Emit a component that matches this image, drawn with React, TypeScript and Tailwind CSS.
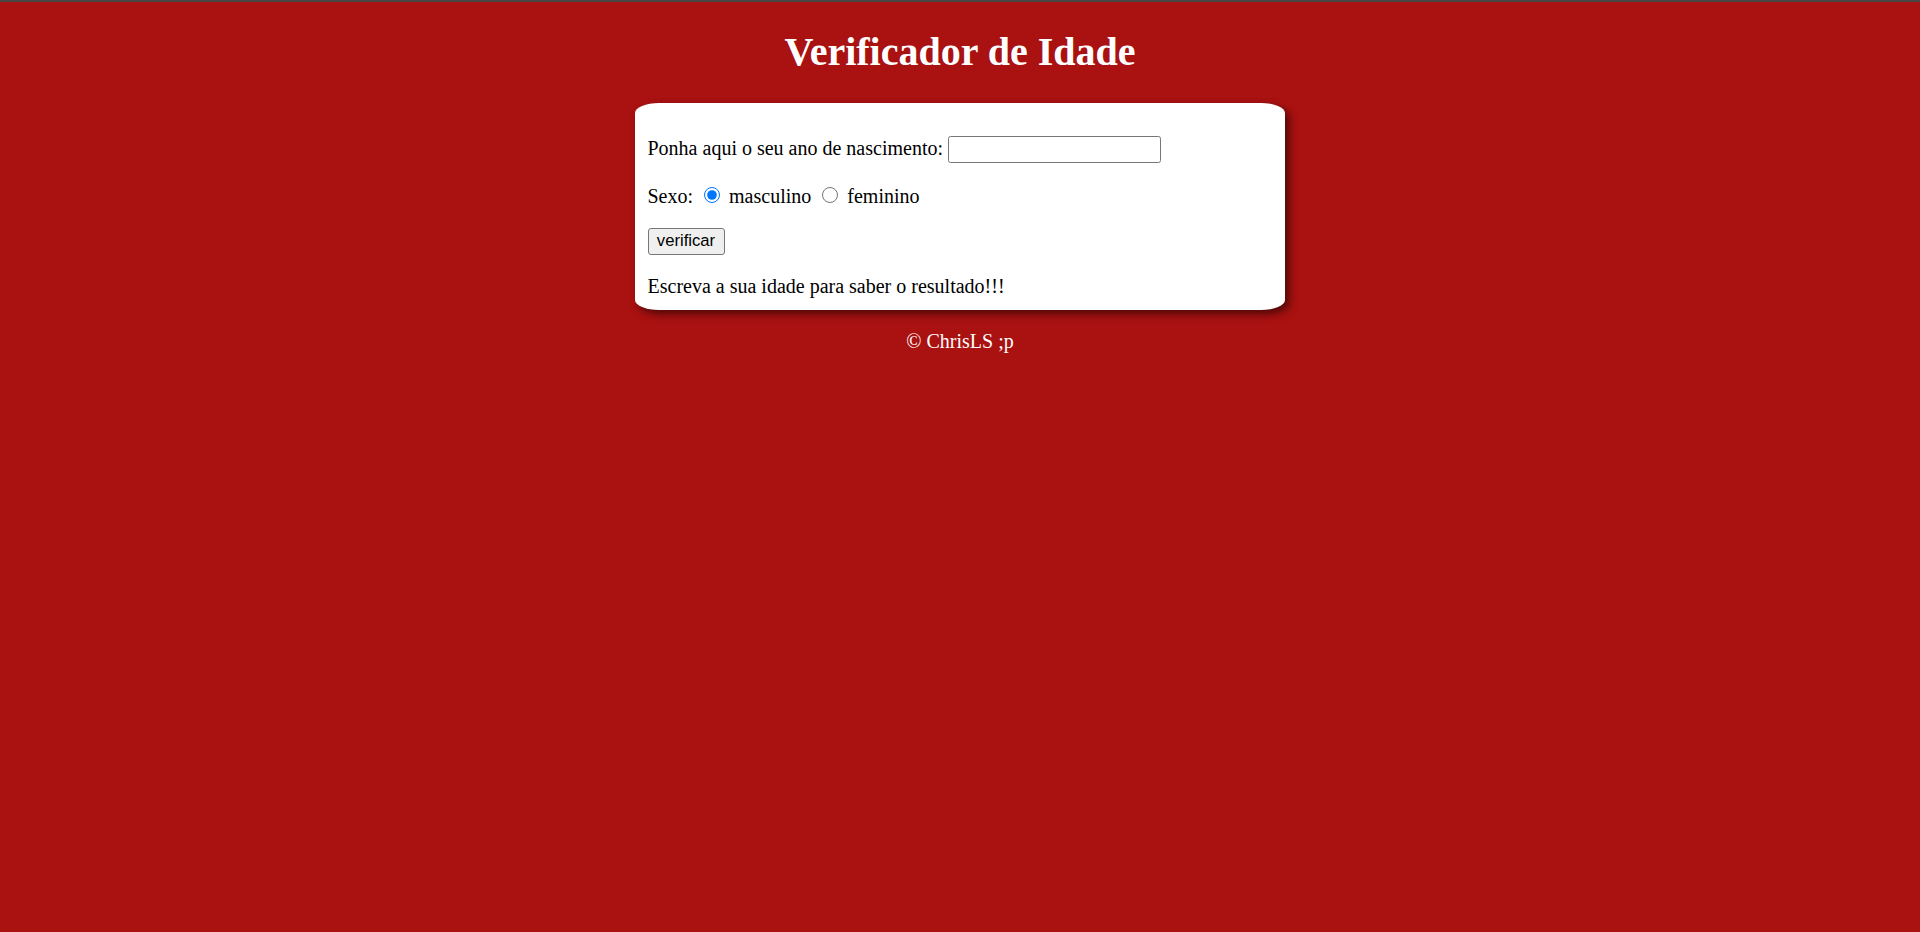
import React from "react";

export default function App() {
  return (
    <div
      className="min-h-[932px] bg-[#aa1111] text-[20px] leading-[23px]"
      style={{ fontFamily: '"Liberation Serif", "Times New Roman", serif' }}
    >
      <div className="h-[2px] bg-[#474747]" />
      <div className="px-[10px] pt-[1px]">
        <h1 className="mt-[26px] mb-[28px] text-center text-[40px] leading-[46px] font-bold text-white">
          Verificador de Idade
        </h1>
        <section className="mx-auto w-[650px] bg-white text-black p-[12.5px] rounded-[24px/10px] shadow-[4px_4px_8px_rgba(0,0,0,0.55)]">
          <p className="my-[20px] h-[29px] flex items-start">
            <span className="mt-[1px]">Ponha aqui o seu ano de nascimento:</span>
            <input
              type="number"
              className="ml-[5px] w-[213px] h-[27px] border-[1.25px] border-[#767676] rounded-[2.5px] bg-white px-[2.5px] text-[16.67px]"
              style={{ fontFamily: '"Liberation Sans", Arial, sans-serif' }}
            />
          </p>
          <p className="my-[20px]">
            Sexo:{" "}
            <input
              type="radio"
              name="sexo"
              defaultChecked
              className="ml-[6px] mr-[4.5px] mb-[2px] w-[15.5px] h-[15.5px] align-baseline"
            />{" "}
            masculino{" "}
            <input
              type="radio"
              name="sexo"
              className="ml-[6px] mr-[4.5px] mb-[2px] w-[15.5px] h-[15.5px] align-baseline"
            />{" "}
            feminino
          </p>
          <p className="my-[20px] h-[27px]">
            <button
              className="w-[77px] h-[27px] border-[1.25px] border-[#767676] rounded-[3px] bg-[#efefef] text-[16.67px] text-black leading-[20px] align-top"
              style={{ fontFamily: '"Liberation Sans", Arial, sans-serif' }}
            >
              verificar
            </button>
          </p>
          <p className="mt-[20px] mb-[0px]">Escreva a sua idade para saber o resultado!!!</p>
        </section>
        <p className="mt-[20px] text-center text-white">© ChrisLS ;p</p>
      </div>
    </div>
  );
}
